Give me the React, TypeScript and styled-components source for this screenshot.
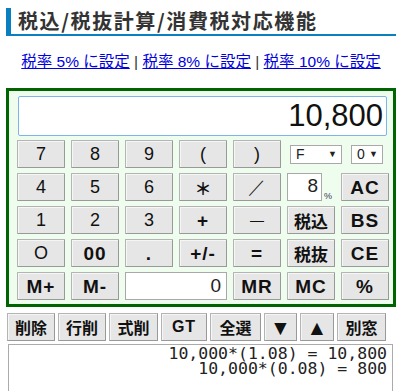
import React from "react";
import styled, { createGlobalStyle } from "styled-components";

const GlobalStyle = createGlobalStyle`
  body {
    margin: 0;
    background: #ffffff;
    font-family: "Liberation Sans", "Noto Sans CJK JP", sans-serif;
    color: #222;
  }
`;

const Page = styled.div`
  width: 390px;
  padding: 8px 0 0 6px;
`;

const Title = styled.h2`
  margin: 0;
  height: 26px;
  padding: 0 0 0 7px;
  border-left: 5px solid #0a7fc0;
  border-bottom: 2px solid #0a7fc0;
  font-family: "Noto Sans CJK JP", sans-serif;
  font-size: 20px;
  font-weight: 700;
  letter-spacing: 1.6px;
  line-height: 25px;
  color: #333;
`;

const RateLinks = styled.p`
  margin: 17px 0 0;
  text-align: center;
  font-family: "Liberation Sans", "Noto Sans CJK JP", sans-serif;
  font-size: 15.5px;
  line-height: 18px;
  color: #333;
`;

const RateLink = styled.a`
  color: #0000e0;
  text-decoration: underline;
  cursor: pointer;
`;

const Frame = styled.div`
  margin-top: 17px;
  border: 3px solid #006400;
  background: #effdef;
  padding: 5px 4px 4px 8px;
`;

const Display = styled.div`
  height: 38px;
  margin: 0 2px 4px 1px;
  border: 1px solid #7eb4ea;
  border-radius: 2px;
  background: #fff;
  font-family: "Liberation Sans", sans-serif;
  font-size: 31px;
  line-height: 38px;
  text-align: right;
  padding-right: 3px;
  color: #111;
`;

const Keys = styled.div`
  display: grid;
  grid-template-columns: repeat(7, 1fr);
  grid-auto-rows: 28px;
  gap: 5px 6px;
`;

const Key = styled.button<{ $bold?: boolean; $cjk?: boolean; $size?: number }>`
  margin: 0;
  padding: 0;
  border: 1px solid #b4b4b4;
  border-right-color: #999;
  border-bottom-color: #999;
  border-radius: 1px;
  background: #e6e6e6;
  box-shadow: inset 1px 1px 0 #f6f6f6;
  color: #111;
  font-family: ${(p) =>
    p.$cjk ? '"Noto Sans CJK JP", sans-serif' : '"Liberation Sans", sans-serif'};
  font-size: ${(p) =>
    p.$size ? `${p.$size}px` : p.$cjk ? "17px" : p.$bold ? "19px" : "18px"};
  font-weight: ${(p) => (p.$bold ? 700 : 400)};
  line-height: 1;
  letter-spacing: ${(p) => (p.$bold && !p.$cjk ? "1px" : "0")};
  cursor: pointer;
`;

const SelectCell = styled.div`
  grid-column: span 2;
  display: flex;
  align-items: center;
  gap: 9px;
  padding-left: 3px;
`;

const FakeSelect = styled.div<{ $w: number }>`
  width: ${(p) => p.$w}px;
  height: 19px;
  box-sizing: border-box;
  border: 1px solid #a9a9a9;
  background: #fff;
  display: flex;
  align-items: center;
  justify-content: space-between;
  padding: 0 4px 0 5px;
  font-family: "Liberation Sans", sans-serif;
  font-size: 14px;
  color: #222;
`;

const Arrow = styled.span`
  font-size: 9px;
  color: #222;
`;

const RateCell = styled.div`
  display: flex;
  align-items: flex-end;
`;

const NumBox = styled.div<{ $span?: number }>`
  grid-column: span ${(p) => p.$span ?? 1};
  box-sizing: border-box;
  height: 100%;
  border: 1px solid #a9a9a9;
  background: #fff;
  font-family: "Liberation Sans", sans-serif;
  font-size: 19px;
  font-weight: 300;
  text-align: right;
  padding-right: 5px;
  line-height: 26px;
  color: #222;
`;

const RateBox = styled(NumBox)`
  width: 35px;
  flex: none;
  padding-right: 3px;
  line-height: 24px;
`;

const PercentMark = styled.span`
  font-size: 9px;
  color: #335;
  margin-left: 2px;
  line-height: 10px;
`;

const Toolbar = styled.div`
  display: flex;
  gap: 3px;
  margin-top: 6px;
  padding-left: 1px;
`;

const ToolButton = styled.button<{ $w: number; $latin?: boolean; $big?: boolean }>`
  width: ${(p) => p.$w}px;
  height: 28px;
  margin: 0;
  padding: 0;
  border: 1px solid #b4b4b4;
  border-right-color: #999;
  border-bottom-color: #999;
  background: #e6e6e6;
  box-shadow: inset 1px 1px 0 #f6f6f6;
  color: #111;
  font-family: ${(p) =>
    p.$latin ? '"Liberation Sans", sans-serif' : '"Noto Sans CJK JP", sans-serif'};
  font-size: ${(p) => (p.$big ? "21px" : "16px")};
  font-weight: 700;
  letter-spacing: ${(p) => (p.$latin && !p.$big ? "1px" : "0")};
  line-height: 1;
`;

const History = styled.div`
  margin: 3px 0 0 2px;
  width: 385px;
  height: 60px;
  box-sizing: border-box;
  border: 1px solid #ababab;
  border-bottom: none;
  padding: 1px 5px 0 0;
  text-align: right;
  font-family: "DejaVu Sans Mono", monospace;
  font-size: 16.5px;
  line-height: 15px;
  color: #222;
  white-space: pre;
`;

type KeyDef = { label: string; bold?: boolean; cjk?: boolean; size?: number };

const digitRows: KeyDef[][] = [
  [{ label: "7" }, { label: "8" }, { label: "9" }, { label: "(" }, { label: ")" }],
  [{ label: "4" }, { label: "5" }, { label: "6" }, { label: "＊", bold: true, cjk: true }, { label: "／" }],
  [{ label: "1" }, { label: "2" }, { label: "3" }, { label: "+", bold: true }, { label: "—", size: 14 }],
  [{ label: "O" }, { label: "00", bold: true }, { label: ".", bold: true }, { label: "+/-", bold: true }, { label: "=", bold: true }],
];

const toolItems = [
  { label: "削除", w: 48 },
  { label: "行削", w: 48 },
  { label: "式削", w: 49 },
  { label: "GT", w: 46, latin: true },
  { label: "全選", w: 51 },
  { label: "▼", w: 33, latin: true, big: true },
  { label: "▲", w: 34, latin: true, big: true },
  { label: "別窓", w: 49 },
];

const App = () => {
  const renderRow = (row: KeyDef[]) =>
    row.map((k) => (
      <Key key={k.label} $bold={k.bold} $cjk={k.cjk} $size={k.size}>
        {k.label}
      </Key>
    ));

  return (
    <Page>
      <GlobalStyle />
      <Title>税込/税抜計算/消費税対応機能</Title>
      <RateLinks>
        <RateLink>税率 5% に設定</RateLink> | <RateLink>税率 8% に設定</RateLink> |{" "}
        <RateLink>税率 10% に設定</RateLink>
      </RateLinks>

      <Frame>
        <Display>10,800</Display>
        <Keys>
          {renderRow(digitRows[0])}
          <SelectCell>
            <FakeSelect $w={52}>
              F<Arrow>▼</Arrow>
            </FakeSelect>
            <FakeSelect $w={32}>
              0<Arrow>▼</Arrow>
            </FakeSelect>
          </SelectCell>

          {renderRow(digitRows[1])}
          <RateCell>
            <RateBox>8</RateBox>
            <PercentMark>%</PercentMark>
          </RateCell>
          <Key $bold>AC</Key>

          {renderRow(digitRows[2])}
          <Key $bold $cjk>税込</Key>
          <Key $bold>BS</Key>

          {renderRow(digitRows[3])}
          <Key $bold $cjk>税抜</Key>
          <Key $bold>CE</Key>

          <Key $bold>M+</Key>
          <Key $bold>M-</Key>
          <NumBox $span={2}>0</NumBox>
          <Key $bold>MR</Key>
          <Key $bold>MC</Key>
          <Key $bold>%</Key>
        </Keys>
      </Frame>

      <Toolbar>
        {toolItems.map((t) => (
          <ToolButton key={t.label} $w={t.w} $latin={t.latin} $big={t.big}>
            {t.label}
          </ToolButton>
        ))}
      </Toolbar>

      <History>
        {"10,000*(1.08) = 10,800\n10,000*(0.08) = 800"}
      </History>
    </Page>
  );
};

export default App;
